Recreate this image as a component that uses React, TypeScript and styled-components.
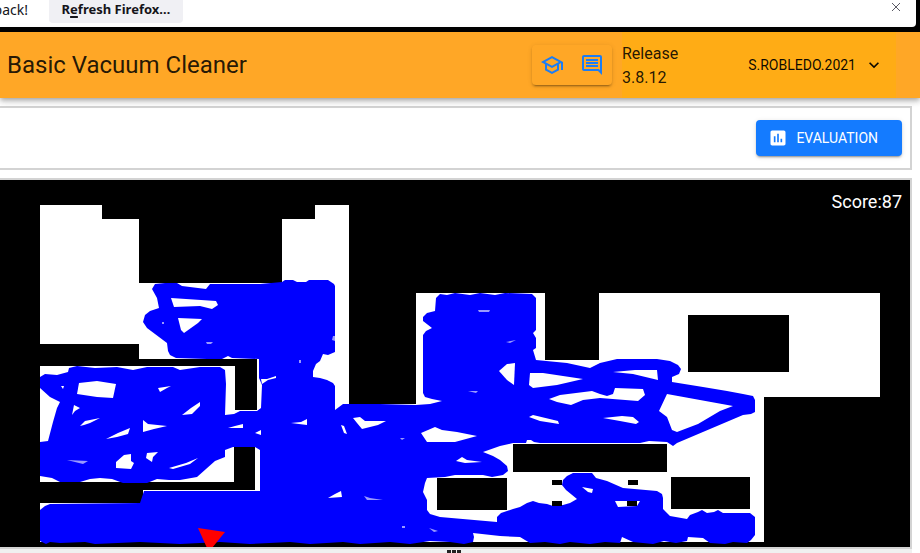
import React from "react";
import styled, { createGlobalStyle } from "styled-components";
import {
  MdAssessment,
  MdKeyboardArrowDown,
  MdOutlineComment,
  MdOutlineSchool,
} from "react-icons/md";

const GlobalStyle = createGlobalStyle`
  * { box-sizing: border-box; }
  body {
    margin: 0;
    background: #fff;
    color: #000;
    font-family: Roboto, "Liberation Sans", sans-serif;
    overflow: hidden;
  }
  button { font: inherit; border: 0; margin: 0; cursor: pointer; }
`;

const BrowserEdge = styled.div`
  background: #000;
  padding: 0 4px 5px 0;
`;

const Notice = styled.div`
  display: flex;
  align-items: flex-start;
  height: 27px;
  background: #fff;
  border-radius: 0 0 4px 0;
  font-family: "Noto Sans", sans-serif;
  font-size: 14px;
  line-height: 20px;
  color: #15141a;
`;

const NoticeText = styled.span`
  width: 49px;
  display: flex;
  justify-content: flex-end;
  padding-right: 21px;
  white-space: nowrap;
`;

const RefreshButton = styled.button`
  width: 134px;
  height: 23px;
  padding: 0 0 4px;
  background: #f0f0f4;
  border-radius: 0 0 4px 4px;
  color: #15141a;
  && { font-size: 13px; font-weight: 700; line-height: 19px; }
  u { text-underline-offset: 2px; text-decoration-thickness: 2px; }
`;

const CloseButton = styled.button`
  margin-left: auto;
  width: 40px;
  height: 14px;
  padding: 0;
  background: none;
  display: grid;
  place-items: center;
`;

const AppBar = styled.header`
  position: relative;
  display: flex;
  align-items: center;
  height: 66px;
  padding: 0 24px 0 7px;
  background: #ffa726;
  box-shadow: 0 2px 4px -1px rgba(0, 0, 0, 0.2), 0 4px 5px rgba(0, 0, 0, 0.14),
    0 1px 10px rgba(0, 0, 0, 0.12);
`;

const Title = styled.h1`
  flex: 1;
  margin: 0;
  font-size: 24px;
  font-weight: 400;
  line-height: 32px;
  color: rgba(0, 0, 0, 0.87);
`;

const ButtonGroup = styled.div`
  display: flex;
  margin-right: 10px;
  border-radius: 4px;
  box-shadow: 0 3px 1px -2px rgba(0, 0, 0, 0.2), 0 2px 2px rgba(0, 0, 0, 0.14),
    0 1px 5px rgba(0, 0, 0, 0.12);
`;

const IconButton = styled.button`
  display: grid;
  place-items: center;
  width: 40px;
  height: 40px;
  padding: 0;
  background: none;
  color: #1c7df5;
`;

const Account = styled.div`
  display: flex;
  align-items: center;
  justify-content: space-between;
  width: 274px;
  height: 100%;
  padding-right: 12px;
  background: #ffac15;
`;

const Release = styled.span`
  width: 64px;
  padding-top: 2px;
  font-size: 16px;
  line-height: 24px;
  color: rgba(0, 0, 0, 0.87);
`;

const UserButton = styled.button`
  display: flex;
  align-items: center;
  gap: 8px;
  padding: 0;
  background: none;
  color: rgba(0, 0, 0, 0.95);
  && { font-size: 14px; line-height: 24px; }
`;

const Main = styled.main`
  padding: 8px 8px 0 0;
`;

const Toolbar = styled.section`
  display: flex;
  justify-content: flex-end;
  padding: 12px 8px;
  border: solid #d3d3d3;
  border-width: 2px 2px 2px 0;
`;

const EvaluationButton = styled.button`
  display: flex;
  align-items: center;
  gap: 8px;
  height: 36px;
  padding: 0 24px 0 12px;
  border-radius: 4px;
  background: #147bff;
  color: #fff;
  box-shadow: 0 3px 1px -2px rgba(0, 0, 0, 0.2), 0 2px 2px rgba(0, 0, 0, 0.14),
    0 1px 5px rgba(0, 0, 0, 0.12);
  && { font-size: 14px; line-height: 24px; }
`;

const Arena = styled.section`
  position: relative;
  margin-top: 8px;
  background: #000;
  border: solid #d3d3d3;
  border-width: 2px 2px 2px 0;
  svg { display: block; width: 100%; height: auto; }
`;

const Score = styled.output`
  position: absolute;
  top: 10px;
  right: 8px;
  font-size: 18px;
  line-height: 24px;
  color: #fff;
`;

const Splitter = styled.div`
  display: flex;
  justify-content: center;
  gap: 1px;
  height: 8px;
  margin-right: 8px;
  padding: 1px 4px 0 0;
  background: #f0f0f0;
`;

const GripDot = styled.span`
  width: 4px;
  height: 4px;
  background: #222;
`;

const FLOOR =
  "40,205 102,205 102,219 139,219 139,283 282,283 282,219 315,219 315,205 349,205 349,404 416,404 416,293 545,293 545,360 599,360 599,293 880,293 880,397 764,397 764,542 40,542";

const WALLS = [
  [38, 344, 101, 22],
  [139, 359, 118, 7],
  [235, 366, 22, 44],
  [234, 447, 21, 43],
  [38, 482, 217, 8],
  [38, 490, 105, 13],
];

const FURNITURE = [
  [688, 315, 101, 57],
  [513, 444, 154, 28],
  [437, 478, 70, 32],
  [671, 477, 79, 32],
  [552, 480, 10, 5],
  [628, 480, 10, 5],
  [552, 501, 10, 5],
  [627, 501, 10, 5],
];

const SWEPT =
  "155,284 165,283 177,283 182,286 206,289 210,284 260,284 282,282 285,280 293,280 297,282 306,282 309,280 328,280 334,284 335,286 335,352 328,355 323,354 320,361 316,364 313,371 313,377 320,378 327,380 333,383 335,386 335,410 343,404 380,404 416,405 430,404 442,401 432,399 425,397 423,393 423,335 426,331 432,328 423,321 423,317 427,313 435,311 436,298 440,294 447,295 455,293 470,295 480,293 495,295 505,293 532,294 536,298 536,330 533,333 536,338 536,348 533,350 536,360 567,363 590,368 600,363 617,359 657,359 670,361 678,365 681,369 679,374 672,377 672,382 703,387 727,391 743,394 753,396 755,400 755,412 751,414 743,415 677,443 673,446 667,442 649,441 640,443 540,443 534,442 531,440 527,440 526,443 513,443 500,446 483,452 493,456 500,460 507,466 508,471 503,475 492,477 483,475 455,475 445,477 427,478 425,483 423,492 427,500 427,510 430,514 440,517 497,522 497,517 501,513 507,511 513,509 520,507 527,503 533,501 539,503 547,504 553,506 563,505 570,503 577,499 566,490 562,485 563,480 567,476 573,473 592,473 596,478 607,481 623,488 657,491 662,494 663,498 663,509 670,516 687,519 690,515 698,512 702,510 707,513 714,512 718,510 723,513 750,513 755,517 755,535 751,540 747,543 733,542 725,544 710,543 703,538 688,537 687,541 676,543 664,541 653,544 633,542 622,537 620,543 605,542 590,544 570,542 560,544 545,542 530,543 520,537 500,536 473,533 474,537 473,542 464,544 450,542 430,541 410,544 390,542 360,544 343,542 310,544 290,542 250,544 220,542 180,544 140,542 95,544 85,542 60,543 50,542 46,544 40,541 40,510 45,506 50,504 140,503 144,491 260,491 260,450 255,447 233,447 225,450 225,457 215,461 206,469 197,477 180,480 169,480 157,479 147,483 123,483 112,479 100,478 90,479 80,482 60,482 52,478 40,476 40,442 48,441 53,422 57,408 60,402 50,397 40,388 40,377 45,374 57,375 68,372 69,368 77,366 95,368 117,367 133,370 147,367 173,367 180,370 200,367 220,367 225,370 226,384 225,415 234,414 240,411 257,411 261,408 262,385 259,378 259,359 232,358 228,356 222,359 207,359 176,358 170,355 168,351 167,343 147,328 143,322 145,315 150,311 159,308 157,298 152,289";

const GAPS = [
  "171,298 216,301 218,305 212,309 200,306 174,307",
  "178,318 202,319 198,323 184,333 181,330",
  "79,383 97,381 116,384 113,398 97,397 77,394",
  "61,386 64,386 63,389",
  "158,388 171,386 167,388 160,392",
  "74,405 80,408 75,411 72,415",
  "80,426 85,421 100,418 90,423 84,425",
  "106,439 118,433 130,428 128,434 117,437",
  "143,420 148,424 167,426 154,429 143,432",
  "182,415 191,408 200,402 200,406 192,414",
  "116,462 124,455 131,454 131,461 134,463 131,469 116,468",
  "147,453 158,452 153,457 152,462 146,458",
  "169,468 186,463 198,458 190,464 173,469",
  "228,428 235,426 243,424 243,428",
  "255,433 261,430 261,435",
  "261,379 267,379 276,376 276,378 268,380 262,384",
  "291,423 301,422 307,419 307,425",
  "341,425 344,426 347,434 344,433",
  "353,418 360,417 365,421 386,421 378,425 362,429 357,423",
  "421,433 435,427 442,430 457,432 477,436 455,442 427,442",
  "456,461 462,457 467,460 482,462 465,463",
  "328,498 335,494 341,491 342,497",
  "499,371 507,364 515,363 514,385 507,380",
  "530,373 543,373 583,379 557,385 533,388 529,385",
  "549,399 560,395 592,391 600,394 607,396 613,394 615,388 643,389 645,395 638,401 600,398 583,400 571,405 557,402",
  "529,417 533,415 558,421 559,424 540,421",
  "603,418 622,416 633,417 639,422 636,424 620,421",
  "613,372 635,370 657,370 658,380 633,374",
  "667,394 700,400 733,406 720,411 698,424 677,432 672,430 667,417 659,411",
  "582,487 593,489 592,493 588,492",
  "615,501 640,501 637,506 618,507",
];

const FAINT_GAPS = [
  "162,322 164,322 164,324 162,324",
  "206,342 213,342 211,344 207,344",
  "333,336 335,336 335,341 332,340",
  "299,360 301,360 301,363 299,363",
  "67,460 88,461 83,464",
  "364,496 370,498 383,500 367,500",
  "400,438 405,438 402,440",
  "402,526 405,526 405,528 402,528",
  "429,528 438,531 434,532",
  "478,310 490,310 489,312 479,312",
  "506,342 516,340 510,343",
  "468,391 478,391 476,393",
];

function CleaningMap() {
  return (
    <svg viewBox="0 180 910 367" role="img" aria-label="Cleaned area map">
      <polygon points={FLOOR} fill="#fff" />
      {WALLS.map(([x, y, width, height]) => (
        <rect key={`${x}-${y}`} x={x} y={y} width={width} height={height} />
      ))}
      <polygon points={SWEPT} fill="#00f" />
      {GAPS.map((points) => (
        <polygon key={points} points={points} fill="#fff" />
      ))}
      {FAINT_GAPS.map((points) => (
        <polygon key={points} points={points} fill="#fff" opacity="0.6" />
      ))}
      {FURNITURE.map(([x, y, width, height]) => (
        <rect key={`${x}-${y}`} x={x} y={y} width={width} height={height} />
      ))}
      <polygon points="198,528 225,532 212,548 207,548" fill="#f00" />
    </svg>
  );
}

export default function App() {
  return (
    <>
      <GlobalStyle />
      <BrowserEdge>
        <Notice>
          <NoticeText>back!</NoticeText>
          <RefreshButton>
            R<u>e</u>fresh Firefox…
          </RefreshButton>
          <CloseButton aria-label="Close">
            <svg width="10" height="10" viewBox="0 0 10 10" stroke="#5b5b66">
              <path d="M1 1l8 8M9 1l-8 8" />
            </svg>
          </CloseButton>
        </Notice>
      </BrowserEdge>
      <AppBar>
        <Title>Basic Vacuum Cleaner</Title>
        <ButtonGroup>
          <IconButton aria-label="Theory">
            <MdOutlineSchool size={24} />
          </IconButton>
          <IconButton aria-label="Forum">
            <MdOutlineComment size={24} />
          </IconButton>
        </ButtonGroup>
        <Account>
          <Release>Release 3.8.12</Release>
          <UserButton>
            S.ROBLEDO.2021
            <MdKeyboardArrowDown size={20} />
          </UserButton>
        </Account>
      </AppBar>
      <Main>
        <Toolbar>
          <EvaluationButton>
            <MdAssessment size={20} />
            EVALUATION
          </EvaluationButton>
        </Toolbar>
        <Arena>
          <CleaningMap />
          <Score>Score:87</Score>
        </Arena>
      </Main>
      <Splitter role="separator">
        <GripDot />
        <GripDot />
        <GripDot />
      </Splitter>
    </>
  );
}
